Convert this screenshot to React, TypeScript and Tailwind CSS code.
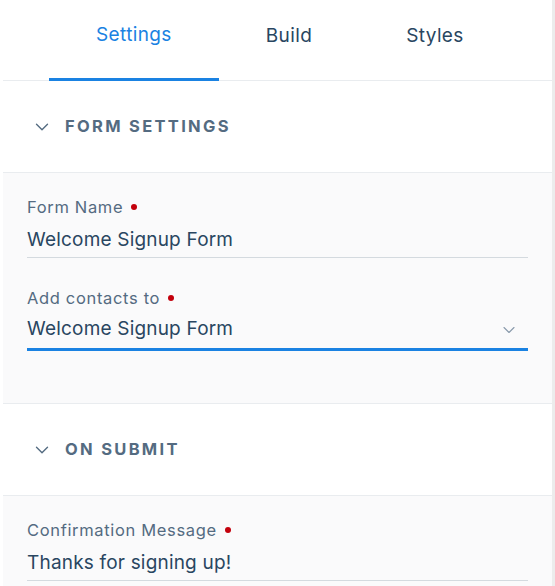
import { ChevronDown } from 'lucide-react';

const tabs = ['Settings', 'Build', 'Styles'];

const SectionHeader = ({ title }: { title: string }) => (
  <div className="flex h-[92px] items-center gap-[12px] border-b border-[#e9ecef] bg-white pl-[28px]">
    <ChevronDown size={22} strokeWidth={1.5} className="text-[#546b81]" />
    <span className="pb-[1px] text-[16.5px] font-bold uppercase tracking-[0.14em] text-[#546b81]">{title}</span>
  </div>
);

const Field = ({
  label,
  value,
  active,
  select,
}: {
  label: string;
  value: string;
  active?: boolean;
  select?: boolean;
}) => (
  <div>
    <div className="flex h-[20px] items-center text-[16.5px] tracking-[0.04em] text-[#546b81]">
      {label}
      <span className="ml-[8px] inline-block h-[6px] w-[6px] rounded-full bg-[#c3000c]" />
    </div>
    <div
      className={
        active
          ? 'mt-[8px] flex h-[35px] items-center justify-between border-b-[3px] border-[#1a82e2] pb-[5px]'
          : 'mt-[10px] flex h-[31px] items-center justify-between border-b border-[#d4dadf] pb-[3px]'
      }
    >
      <span className="text-[19px] tracking-[0.01em] text-[#294661]">{value}</span>
      {select && <ChevronDown size={20} strokeWidth={1.3} className="mr-[9px] text-[#8a9bab]" />}
    </div>
  </div>
);

export default function App() {
  return (
    <div className="h-[586px] w-[555px] overflow-hidden bg-white pl-[3px]" style={{ fontFamily: 'Inter, sans-serif' }}>
      <div className="h-full w-[552px] border-r-[3px] border-[#ececec]">
        <div className="flex h-[81px] border-b border-[#e9ecef] pl-[46px]">
          {tabs.map((t, i) => (
            <div
              key={t}
              className={
                i === 0
                  ? 'flex items-center border-b-[3px] border-[#1a82e2] px-[47px] pb-[8px] text-[19px] tracking-[0.02em] text-[#1a82e2] -mb-px'
                  : 'flex items-center px-[47px] pb-[8px] text-[19px] tracking-[0.02em] text-[#294661]'
              }
            >
              {t}
            </div>
          ))}
        </div>

        <SectionHeader title="Form Settings" />
        <div className="flex flex-col gap-[30px] border-b border-[#e9ecef] bg-[#fafafb] px-[24px] pb-[52px] pt-[24px]">
          <Field label="Form Name" value="Welcome Signup Form" />
          <Field label="Add contacts to" value="Welcome Signup Form" active select />
        </div>

        <SectionHeader title="On Submit" />
        <div className="bg-[#fafafb] px-[24px] pb-[40px] pt-[24px]">
          <Field label="Confirmation Message" value="Thanks for signing up!" />
        </div>
      </div>
    </div>
  );
}
